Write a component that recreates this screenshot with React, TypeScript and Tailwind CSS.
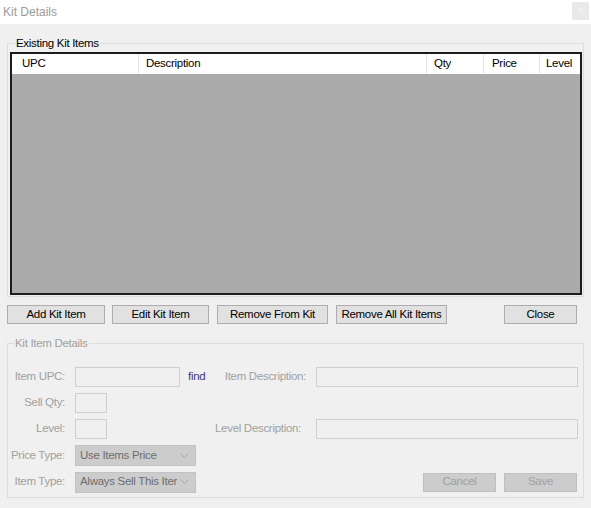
const font = { fontFamily: '"Liberation Sans", Arial, sans-serif' };

function Btn({ label, w, disabled }: { label: string; w: string; disabled?: boolean }) {
  return (
    <div
      className={`${w} h-[19px] flex items-center justify-center border whitespace-nowrap leading-none ${
        disabled ? 'bg-[#cccccc] border-[#bfbfbf] text-[#a0a0a0]' : 'bg-[#e1e1e1] border-[#adadad] text-black'
      }`}
    >
      {label}
    </div>
  );
}

function Field({ w }: { w: string }) {
  return <div className={`${w} h-[20px] border border-[#cfcfcf] bg-[#f0f0f0]`} />;
}

function Label({ w, text }: { w: string; text: string }) {
  return <div className={`${w} flex justify-end whitespace-nowrap`}>{text}</div>;
}

function Combo({ text }: { text: string }) {
  return (
    <div className="w-[121px] h-[21px] border border-[#c2c2c2] bg-[#cccccc] flex items-center pl-[4px] pr-[6px] text-[#6d6d6d]">
      <span className="flex-1 whitespace-nowrap overflow-hidden">{text}</span>
      <svg width="9" height="6" viewBox="0 0 9 6" className="ml-[3px] shrink-0">
        <polyline points="0.5,0.5 4.5,4.5 8.5,0.5" fill="none" stroke="#a8a8a8" strokeWidth="1" />
      </svg>
    </div>
  );
}

export default function App() {
  const cols = [
    { name: 'UPC', w: 'w-[127px]', pl: 'pl-[10px]' },
    { name: 'Description', w: 'w-[288px]', pl: 'pl-[7px]' },
    { name: 'Qty', w: 'w-[57px]', pl: 'pl-[7px]' },
    { name: 'Price', w: 'w-[56px]', pl: 'pl-[8px]' },
    { name: 'Level', w: 'w-[40px]', pl: 'pl-[6px]' },
  ];

  return (
    <div className="w-[591px] h-[508px] bg-[#f0f0f0] text-[11.5px] tracking-[-0.3px] overflow-hidden" style={font}>
      {/* title bar */}
      <div className="h-[24px] bg-white flex items-start">
        <div className="flex-1 pl-[3px] pt-[3px] text-[12px] tracking-normal text-[#9a9a9a]">Kit Details</div>
        <div className="w-[17px] h-[18px] mt-[2px] mr-[2px] bg-[#e9e9e9] flex items-center justify-center text-[9px] text-[#f7f7f7]">
          x
        </div>
      </div>

      {/* existing items */}
      <fieldset className="mx-[7px] mt-[12px] border border-[#dcdcdc] px-[1px] pb-[1px]">
        <legend className="ml-[6px] px-[1px] leading-[15px] text-black">Existing Kit Items</legend>
        <div className="mt-[1px] ml-[1px] h-[243px] border-2 border-[#1c1c1c] bg-[#ababab] flex flex-col">
          <div className="h-[20px] bg-white flex items-center text-black">
            {cols.map((c, i) => (
              <div
                key={c.name}
                className={`${c.w} ${c.pl} h-full flex items-center ${i < cols.length - 1 ? 'border-r border-[#e5e5e5]' : ''}`}
              >
                {c.name}
              </div>
            ))}
            <div className="flex-1" />
          </div>
        </div>
      </fieldset>

      {/* buttons */}
      <div className="mt-[8px] flex pl-[7px]">
        <Btn label="Add Kit Item" w="w-[98px]" />
        <div className="ml-[7px]"><Btn label="Edit Kit Item" w="w-[97px]" /></div>
        <div className="ml-[8px]"><Btn label="Remove From Kit" w="w-[111px]" /></div>
        <div className="ml-[8px]"><Btn label="Remove All Kit Items" w="w-[111px]" /></div>
        <div className="ml-[57px]"><Btn label="Close" w="w-[73px]" /></div>
      </div>

      {/* details */}
      <fieldset className="mx-[7px] mt-[12px] border border-[#dcdcdc] pb-[5px] text-[#a0a0a0]">
        <legend className="ml-[6px] px-[1px] leading-[15px]">Kit Item Details</legend>
        <div className="pt-[16px] flex flex-col gap-[6px]">
          <div className="flex items-center h-[20px]">
            <Label w="w-[57px]" text="Item UPC:" />
            <div className="ml-[10px]"><Field w="w-[105px]" /></div>
            <div className="w-[40px] pl-[8px] text-[#3a3a7a]">find</div>
            <Label w="w-[86px]" text="Item Description:" />
            <div className="ml-[10px]"><Field w="w-[262px]" /></div>
          </div>
          <div className="flex items-center h-[20px]">
            <Label w="w-[57px]" text="Sell Qty:" />
            <div className="ml-[10px]"><Field w="w-[32px]" /></div>
          </div>
          <div className="flex items-center h-[20px]">
            <Label w="w-[57px]" text="Level:" />
            <div className="ml-[10px]"><Field w="w-[32px]" /></div>
            <Label w="w-[194px]" text="Level Description:" />
            <div className="ml-[15px]"><Field w="w-[262px]" /></div>
          </div>
          <div className="flex items-center h-[21px]">
            <Label w="w-[57px]" text="Price Type:" />
            <div className="ml-[10px]"><Combo text="Use Items Price" /></div>
          </div>
          <div className="flex items-center h-[20px]">
            <Label w="w-[57px]" text="Item Type:" />
            <div className="ml-[10px]"><Combo text="Always Sell This Item" /></div>
            <div className="ml-[227px]"><Btn label="Cancel" w="w-[73px]" disabled /></div>
            <div className="ml-[8px]"><Btn label="Save" w="w-[73px]" disabled /></div>
          </div>
        </div>
      </fieldset>
    </div>
  );
}
